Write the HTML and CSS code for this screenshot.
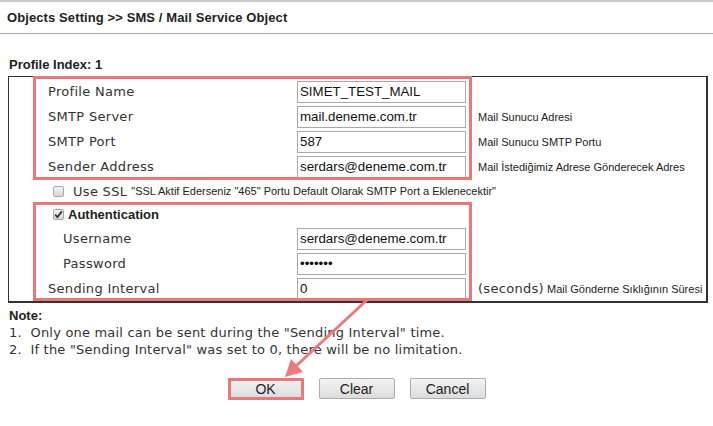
FILE: index.html
```html
<!DOCTYPE html>
<html lang="tr">
<head>
    <meta charset="UTF-8">
    <meta name="viewport" content="width=device-width, initial-scale=1.0">
    <title>SMS / Mail Service Object</title>
    <link rel="stylesheet" href="styles.css">
</head>
<body>
    <div class="page">
        <div class="title">Objects Setting &gt;&gt; SMS / Mail Service Object</div>
        <div class="profile-index">Profile Index: 1</div>

        <div class="form-box">
            <div class="row">
                <span class="lbl">Profile Name</span>
                <input class="field" type="text" value="SIMET_TEST_MAIL">
                <span class="hint"></span>
            </div>
            <div class="row">
                <span class="lbl">SMTP Server</span>
                <input class="field" type="text" value="mail.deneme.com.tr">
                <span class="hint">Mail Sunucu Adresi</span>
            </div>
            <div class="row">
                <span class="lbl">SMTP Port</span>
                <input class="field" type="text" value="587">
                <span class="hint">Mail Sunucu SMTP Portu</span>
            </div>
            <div class="row">
                <span class="lbl">Sender Address</span>
                <input class="field" type="text" value="serdars@deneme.com.tr">
                <span class="hint">Mail İstediğimiz Adrese Gönderecek Adres</span>
            </div>
            <div class="row row-check row-ssl">
                <span class="chk"></span>
                <span class="chk-text">Use SSL</span>
                <span class="hint">"SSL Aktif Ederseniz "465" Portu Default Olarak SMTP Port a Eklenecektir"</span>
            </div>
            <div class="row row-check row-auth">
                <span class="chk checked">
                    <svg viewBox="0 0 11 11" width="11" height="11"><path d="M2.2 5.6 L4.4 8 L8.9 2.4" fill="none" stroke="#333" stroke-width="1.8"/></svg>
                </span>
                <span class="auth-text">Authentication</span>
            </div>
            <div class="row row-sub">
                <span class="lbl">Username</span>
                <input class="field" type="text" value="serdars@deneme.com.tr">
                <span class="hint"></span>
            </div>
            <div class="row row-sub">
                <span class="lbl">Password</span>
                <input class="field" type="password" value="1234567">
                <span class="hint"></span>
            </div>
            <div class="row">
                <span class="lbl">Sending Interval</span>
                <input class="field" type="text" value="0">
                <span class="hint"><span class="unit">(seconds)</span> Mail Gönderne Sıklığının Süresi</span>
            </div>
        </div>

        <div class="note">
            <div class="note-title">Note:</div>
            <div class="note-line">1.&nbsp; Only one mail can be sent during the "Sending Interval" time.</div>
            <div class="note-line">2.&nbsp; If the "Sending Interval" was set to 0, there will be no limitation.</div>
        </div>

        <div class="buttons">
            <button class="btn">OK</button>
            <button class="btn">Clear</button>
            <button class="btn">Cancel</button>
        </div>

        <!-- annotation marks drawn over the form -->
        <div class="mark mark-server"></div>
        <div class="mark mark-auth"></div>
        <div class="mark mark-ok"></div>
        <svg class="arrow" width="713" height="426" viewBox="0 0 713 426">
            <line x1="368" y1="299" x2="296" y2="366" stroke="#ec7a7c" stroke-width="3"/>
            <polygon points="285,377 291,359 303,372" fill="#ec7a7c"/>
        </svg>
    </div>
</body>
</html>
```

FILE: styles.css
```css
body {
    margin: 0;
    padding: 0;
    background-color: #fff;
    color: #222;
    font-family: "Liberation Sans", Arial, sans-serif;
}

.page {
    position: relative;
    width: 713px;
    height: 426px;
    border-top: 2px solid #c8c8c8;
    box-sizing: border-box;
    overflow: hidden;
}

/* Header */
.title {
    height: 31px;
    line-height: 31px;
    padding-left: 7px;
    font-size: 13px;
    font-weight: bold;
    letter-spacing: 0.1px;
    border-bottom: 1px solid #a8a8a8;
}

.profile-index {
    height: 42px;
    box-sizing: border-box;
    padding: 23px 0 0 9px;
    line-height: 16px;
    font-size: 13px;
    font-weight: bold;
}

/* Form table */
.form-box {
    margin: 0 5px 0 8px;
    padding-top: 2px;
    border-top: 1px solid #333;
    border-left: 1px solid #333;
    border-right: 2px solid #333;
    border-bottom: 2px solid #333;
}

.row {
    display: grid;
    grid-template-columns: 288px 181px 1fr;
    align-items: center;
    height: 25px;
}

.lbl {
    padding-left: 39px;
    font-family: "DejaVu Sans", Verdana, sans-serif;
    font-size: 13px;
    letter-spacing: 0.3px;
    color: #333;
}

.row-sub .lbl {
    padding-left: 54px;
}

.field {
    width: 169px;
    height: 22px;
    box-sizing: border-box;
    margin: 0;
    padding: 0 2px;
    border: 1px solid #a9a9a9;
    font-family: "Liberation Sans", Arial, sans-serif;
    font-size: 13.3px;
    color: #111;
    outline: none;
}

.hint {
    font-size: 11px;
    color: #222;
}

.unit {
    font-family: "DejaVu Sans", Verdana, sans-serif;
    font-size: 13px;
    letter-spacing: 0.3px;
    color: #333;
}

.row-check {
    display: flex;
    align-items: center;
    padding-left: 44px;
}

.row-ssl {
    height: 24px;
}

.row-auth {
    height: 23px;
}

.chk {
    display: inline-block;
    width: 11px;
    height: 11px;
    box-sizing: border-box;
    border: 1px solid #a8a8a8;
    border-radius: 2px;
    background: linear-gradient(#f4f4f4, #d6d6d6);
    position: relative;
}

.chk svg {
    position: absolute;
    left: -1px;
    top: -1px;
}

.chk-text {
    margin-left: 9px;
    margin-right: 4px;
    font-family: "DejaVu Sans", Verdana, sans-serif;
    font-size: 13px;
    letter-spacing: 0.3px;
    color: #333;
}

.auth-text {
    margin-left: 4px;
    font-size: 13px;
    font-weight: bold;
}

/* Notes */
.note {
    margin-top: 4px;
    padding-left: 9px;
    line-height: 17px;
}

.note-title {
    font-size: 13px;
    font-weight: bold;
}

.note-line {
    font-family: "DejaVu Sans", Verdana, sans-serif;
    font-size: 13px;
    letter-spacing: 0.2px;
    color: #333;
}

/* Buttons */
.buttons {
    display: flex;
    justify-content: center;
    gap: 15px;
    margin-top: 20px;
}

.btn {
    width: 76px;
    height: 21px;
    padding: 0;
    border: 1px solid #acacac;
    border-radius: 2px;
    background: linear-gradient(#f3f3f3, #dcdcdc);
    font-family: "Liberation Sans", Arial, sans-serif;
    font-size: 14px;
    color: #222;
}

/* Annotation marks */
.mark {
    position: absolute;
    box-sizing: border-box;
    border: 3px solid #e8787a;
}

.mark-server {
    left: 33px;
    top: 74px;
    width: 439px;
    height: 104px;
}

.mark-auth {
    left: 33px;
    top: 200px;
    width: 439px;
    height: 99px;
}

.mark-ok {
    left: 228px;
    top: 376px;
    width: 76px;
    height: 22px;
}

.arrow {
    position: absolute;
    left: 0;
    top: -2px;
    pointer-events: none;
}
```
